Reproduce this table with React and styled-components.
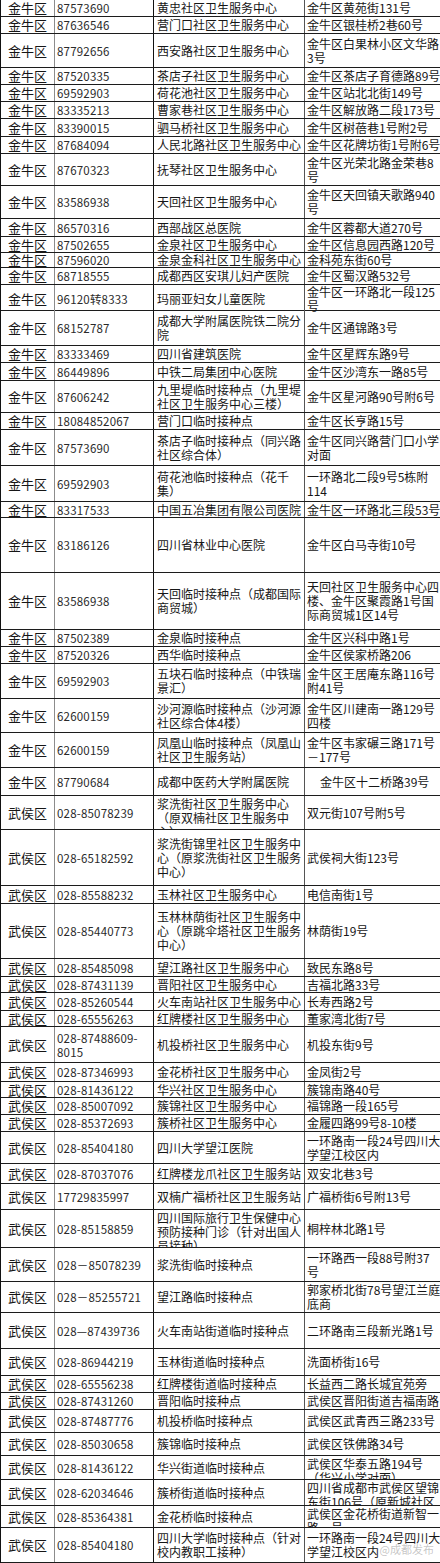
import React from 'react';
import styled, { createGlobalStyle } from 'styled-components';

const GlobalStyle = createGlobalStyle`
    html, body {
        margin: 0;
        padding: 0;
        background: #fff;
    }
    body {
        font-family: "Noto Sans CJK SC", "Noto Sans", sans-serif;
        color: #161616;
    }
`;

// h = row height in px (bottom border included); \n = line break as in the sheet
const rows = [
    { h: 17, area: '金牛区', tel: '87573690', name: '黄忠社区卫生服务中心', addr: '金牛区黄苑街131号' },
    { h: 17, area: '金牛区', tel: '87636546', name: '营门口社区卫生服务中心', addr: '金牛区银桂桥2巷60号' },
    { h: 34, area: '金牛区', tel: '87792656', name: '西安路社区卫生服务中心', addr: '金牛区白果林小区文华路\n3号' },
    { h: 17, area: '金牛区', tel: '87520335', name: '茶店子社区卫生服务中心', addr: '金牛区茶店子育德路89号' },
    { h: 17, area: '金牛区', tel: '69592903', name: '荷花池社区卫生服务中心', addr: '金牛区站北北街149号' },
    { h: 17, area: '金牛区', tel: '83335213', name: '曹家巷社区卫生服务中心', addr: '金牛区解放路二段173号' },
    { h: 18, area: '金牛区', tel: '83390015', name: '驷马桥社区卫生服务中心', addr: '金牛区树蓓巷1号附2号' },
    { h: 17, area: '金牛区', tel: '87684094', name: '人民北路社区卫生服务中心', addr: '金牛区花牌坊街1号附6号' },
    { h: 32, area: '金牛区', tel: '87670323', name: '抚琴社区卫生服务中心', addr: '金牛区光荣北路金荣巷8\n号' },
    { h: 33, area: '金牛区', tel: '83586938', name: '天回社区卫生服务中心', addr: '金牛区天回镇天歌路940\n号' },
    { h: 18, area: '金牛区', tel: '86570316', name: '西部战区总医院', addr: '金牛区蓉都大道270号' },
    { h: 16, area: '金牛区', tel: '87502655', name: '金泉社区卫生服务中心', addr: '金牛区信息园西路120号' },
    { h: 15, area: '金牛区', tel: '87596020', name: '金泉金科社区卫生服务中心', addr: '金科苑东街60号' },
    { h: 17, area: '金牛区', tel: '68718555', name: '成都西区安琪儿妇产医院', addr: '金牛区蜀汉路532号' },
    { h: 26, area: '金牛区', tel: '96120转8333', name: '玛丽亚妇女儿童医院', addr: '金牛区一环路北一段125\n号' },
    { h: 35, area: '金牛区', tel: '68152787', name: '成都大学附属医院铁二院分\n院', addr: '金牛区通锦路3号' },
    { h: 17, area: '金牛区', tel: '83333469', name: '四川省建筑医院', addr: '金牛区星辉东路9号' },
    { h: 18, area: '金牛区', tel: '86449896', name: '中铁二局集团中心医院', addr: '金牛区沙湾东一路85号' },
    { h: 32, area: '金牛区', tel: '87606242', name: '九里堤临时接种点（九里堤\n社区卫生服务中心三楼）', addr: '金牛区星河路90号附6号' },
    { h: 17, area: '金牛区', tel: '18084852067', name: '营门口临时接种点', addr: '金牛区长亨路15号' },
    { h: 36, area: '金牛区', tel: '87573690', name: '茶店子临时接种点（同兴路\n社区综合体）', addr: '金牛区同兴路营门口小学\n对面' },
    { h: 36, area: '金牛区', tel: '69592903', name: '荷花池临时接种点（花千\n集）', addr: '一环路北二段9号5栋附\n114' },
    { h: 16, area: '金牛区', tel: '83317533', name: '中国五冶集团有限公司医院', addr: '金牛区一环路北三段53号' },
    { h: 55, area: '金牛区', tel: '83186126', name: '四川省林业中心医院', addr: '金牛区白马寺街10号' },
    { h: 57, area: '金牛区', tel: '83586938', name: '天回临时接种点（成都国际\n商贸城）', addr: '天回社区卫生服务中心四\n楼、金牛区聚霞路1号国\n际商贸城1区14号' },
    { h: 17, area: '金牛区', tel: '87502389', name: '金泉临时接种点', addr: '金牛区兴科中路1号' },
    { h: 17, area: '金牛区', tel: '87520326', name: '西华临时接种点', addr: '金牛区侯家桥路206' },
    { h: 35, area: '金牛区', tel: '69592903', name: '五块石临时接种点（中铁瑞\n景汇）', addr: '金牛区王居庵东路116号\n附41号' },
    { h: 34, area: '金牛区', tel: '62600159', name: '沙河源临时接种点（沙河源\n社区综合体4楼）', addr: '金牛区川建南一路129号\n四楼' },
    { h: 35, area: '金牛区', tel: '62600159', name: '凤凰山临时接种点（凤凰山\n社区卫生服务站）', addr: '金牛区韦家碾三路171号\n－177号' },
    { h: 28, area: '金牛区', tel: '87790684', name: '成都中医药大学附属医院', addr: '金牛区十二桥路39号', indent: true },
    { h: 34, area: '武侯区', tel: '028-85078239', name: '浆洗街社区卫生服务中心\n（原双楠社区卫生服务中\n心）', nameTop: true, addr: '双元街107号附5号' },
    { h: 56, area: '武侯区', tel: '028-65182592', name: '浆洗街锦里社区卫生服务中\n心（原浆洗街社区卫生服务\n中心）', addr: '武侯祠大街123号' },
    { h: 18, area: '武侯区', tel: '028-85588232', name: '玉林社区卫生服务中心', addr: '电信南街1号' },
    { h: 55, area: '武侯区', tel: '028-85440773', name: '玉林林荫街社区卫生服务中\n心（原跳伞塔社区卫生服务\n中心）', addr: '林荫街19号' },
    { h: 18, area: '武侯区', tel: '028-85485098', name: '望江路社区卫生服务中心', addr: '致民东路8号' },
    { h: 16, area: '武侯区', tel: '028-87431139', name: '晋阳社区卫生服务中心', addr: '吉福北路33号' },
    { h: 18, area: '武侯区', tel: '028-85260544', name: '火车南站社区卫生服务中心', addr: '长寿西路2号' },
    { h: 16, area: '武侯区', tel: '028-65556263', name: '红牌楼社区卫生服务中心', addr: '董家湾北街7号' },
    { h: 36, area: '武侯区', tel: '028-87488609-\n8015', name: '机投桥社区卫生服务中心', addr: '机投东街9号' },
    { h: 19, area: '武侯区', tel: '028-87346993', name: '金花桥社区卫生服务中心', addr: '金凤街2号' },
    { h: 16, area: '武侯区', tel: '028-81436122', name: '华兴社区卫生服务中心', addr: '簇锦南路40号' },
    { h: 17, area: '武侯区', tel: '028-85007092', name: '簇锦社区卫生服务中心', addr: '福锦路一段165号' },
    { h: 17, area: '武侯区', tel: '028-85372693', name: '簇桥社区卫生服务中心', addr: '金履四路99号8-10楼' },
    { h: 32, area: '武侯区', tel: '028-85404180', name: '四川大学望江医院', addr: '一环路南一段24号四川大\n学望江校区内' },
    { h: 20, area: '武侯区', tel: '028-87037076', name: '红牌楼龙爪社区卫生服务站', addr: '双安北巷3号' },
    { h: 26, area: '武侯区', tel: '17729835997', name: '双楠广福桥社区卫生服务站', addr: '广福桥街6号附13号' },
    { h: 38, area: '武侯区', tel: '028-85158859', name: '四川国际旅行卫生保健中心\n预防接种门诊（针对出国人\n员接种）', nameTop: true, addr: '桐梓林北路1号' },
    { h: 34, area: '武侯区', tel: '028－85078239', name: '浆洗街临时接种点', addr: '一环路西一段88号附37\n号' },
    { h: 31, area: '武侯区', tel: '028－85255721', name: '望江路临时接种点', addr: '郭家桥北街78号望江兰庭\n底商' },
    { h: 36, area: '武侯区', tel: '028—87439736', name: '火车南站街道临时接种点', addr: '二环路南三段新光路1号' },
    { h: 27, area: '武侯区', tel: '028-86944219', name: '玉林街道临时接种点', addr: '洗面桥街16号' },
    { h: 17, area: '武侯区', tel: '028-65556238', name: '红牌楼街道临时接种点', addr: '长益西二路长城宜苑旁' },
    { h: 17, area: '武侯区', tel: '028-87431260', name: '晋阳临时接种点', addr: '武侯区晋阳街道吉福南路\n111号', addrTop: true },
    { h: 23, area: '武侯区', tel: '028-87487776', name: '机投桥临时接种点', addr: '武侯区武青西三路233号' },
    { h: 23, area: '武侯区', tel: '028-85030658', name: '簇锦临时接种点', addr: '武侯区铁佛路34号' },
    { h: 24, area: '武侯区', tel: '028-81436122', name: '华兴街道临时接种点', addr: '武侯区华泰五路194号\n（华兴小学对面）', addrTop: true },
    { h: 26, area: '武侯区', tel: '028-62034646', name: '簇桥街道临时接种点', addr: '四川省成都市武侯区望锦\n东街106号（原新城社区', addrTop: true },
    { h: 22, area: '武侯区', tel: '028-85364381', name: '金花桥临时接种点', addr: '武侯区金花桥街道新智一\n路一号', addrTop: true },
    { h: 35, area: '武侯区', tel: '028-85404180', name: '四川大学临时接种点（针对\n校内教职工接种）', addr: '一环路南一段24号四川大\n学望江校区内' },
];

export default function App() {
    return (
        <>
            <GlobalStyle />
            <Sheet>
                {rows.map((r, i) => (
                    <Row key={i} $h={r.h}>
                        <Area>{r.area}</Area>
                        <Tel>{r.tel}</Tel>
                        <Name $top={r.nameTop}>{r.name}</Name>
                        <Addr $top={r.addrTop} $indent={r.indent}>{r.addr}</Addr>
                    </Row>
                ))}
                <Watermark>@成都发布</Watermark>
            </Sheet>
        </>
    );
}

const Sheet = styled.div`
    position: relative;
    width: 440px;
    border-left: 1px solid #111;
    box-sizing: border-box;
    overflow: hidden;
`;

const Row = styled.div`
    display: grid;
    grid-template-columns: 54px 99px 151px 1fr;
    height: ${(p) => p.$h}px;
    border-bottom: 1px solid #1c1c1c;
    box-sizing: border-box;
`;

const Cell = styled.div`
    display: flex;
    align-items: ${(p) => (p.$top ? 'flex-start' : 'center')};
    padding: ${(p) => (p.$top ? '1px' : '0')} 0 0 2px;
    overflow: ${(p) => (p.$top ? 'hidden' : 'visible')};
    white-space: pre;
    box-sizing: border-box;
    font-size: 12px;
    line-height: 14px;
`;

const Area = styled(Cell)`
    justify-content: center;
    padding: 0;
    font-size: 13px;
    border-right: 1px solid #8c8c8c;
`;

const Tel = styled(Cell)`
    font-size: 11.5px;
    color: #2a2a2a;
    letter-spacing: 0.2px;
    border-right: 1px solid #111;
`;

const Name = styled(Cell)`
    padding-left: 3px;
    border-right: 1px solid #555;
`;

const Addr = styled(Cell)`
    padding-left: ${(p) => (p.$indent ? '15px' : '2px')};
`;

const Watermark = styled.span`
    position: absolute;
    right: 6px;
    bottom: 6px;
    font-size: 11px;
    color: rgba(150, 150, 150, 0.55);
`;
